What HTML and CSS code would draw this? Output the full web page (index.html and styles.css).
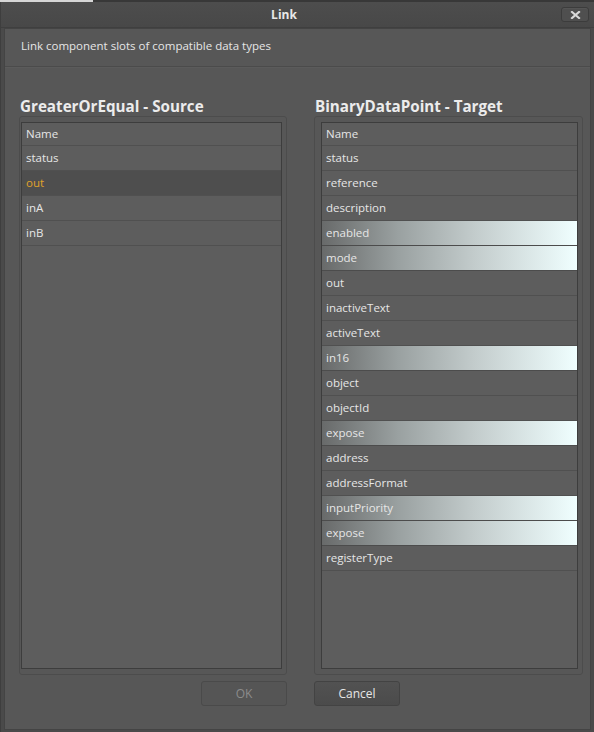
FILE: index.html
```html
<!DOCTYPE html>
<html>
<head>
<meta charset="utf-8">
<link rel="stylesheet" href="styles.css">
</head>
<body>
<div class="strip"><div class="strip-light"></div></div>
<div class="dialog">
  <div class="titlebar">
    <div class="title">Link</div>
    <div class="close">
      <svg width="11" height="8" viewBox="0 0 11 8"><path d="M2 1 L9 7 M9 1 L2 7" stroke="#d8d8d8" stroke-width="2.2" stroke-linecap="square"/></svg>
    </div>
  </div>
  <div class="content">
    <div class="desc">Link component slots of compatible data types</div>
    <div class="columns">
      <div class="col">
        <div class="heading">GreaterOrEqual - Source</div>
        <div class="frame frame-left">
          <div class="list">
            <div class="row head">Name</div>
            <div class="row">status</div>
            <div class="row selected">out</div>
            <div class="row">inA</div>
            <div class="row">inB</div>
          </div>
        </div>
        <div class="buttons buttons-left"><div class="btn disabled">OK</div></div>
      </div>
      <div class="col">
        <div class="heading">BinaryDataPoint - Target</div>
        <div class="frame frame-right">
          <div class="list">
            <div class="row head">Name</div>
            <div class="row">status</div>
            <div class="row">reference</div>
            <div class="row">description</div>
            <div class="row compat">enabled</div>
            <div class="row compat">mode</div>
            <div class="row">out</div>
            <div class="row">inactiveText</div>
            <div class="row">activeText</div>
            <div class="row compat">in16</div>
            <div class="row">object</div>
            <div class="row">objectId</div>
            <div class="row compat">expose</div>
            <div class="row">address</div>
            <div class="row">addressFormat</div>
            <div class="row compat">inputPriority</div>
            <div class="row compat">expose</div>
            <div class="row">registerType</div>
          </div>
        </div>
        <div class="buttons"><div class="btn">Cancel</div></div>
      </div>
    </div>
  </div>
</div>
</body>
</html>
```
FILE: styles.css
```css
html, body {
  margin: 0;
  padding: 0;
}
body {
  width: 594px;
  height: 732px;
  overflow: hidden;
  background: #3c3c3c;
  font-family: "Open Sans", "Liberation Sans", sans-serif;
  font-size: 11.5px;
  color: #e6e6e6;
}
.strip {
  height: 2px;
  background: #383838;
}
.strip-light {
  width: 93px;
  height: 2px;
  background: #d6d6d6;
}
.dialog {
  height: 730px;
  background: #4a4a4a;
  border-left: 1px solid #3e3e3e;
  box-sizing: border-box;
  display: flex;
  flex-direction: column;
}
.titlebar {
  height: 25px;
  border-bottom: 1px solid #3f3f3f;
  display: flex;
  align-items: center;
  background: linear-gradient(#4d4d4d, #484848);
}
.title {
  flex: 1;
  text-align: center;
  padding-left: 6px;
  font-weight: bold;
  font-size: 12px;
  color: #e8e8e8;
}
.close {
  width: 26px;
  height: 13px;
  margin-right: 5px;
  border: 1px solid #3c3c3c;
  border-radius: 3px;
  background: #4f4f4f;
  box-shadow: inset 0 1px 0 #555555;
  display: flex;
  align-items: center;
  justify-content: center;
}
.close svg { display: block; }
.content {
  margin: 0 3px 0 3px;
  height: 702px;
  box-sizing: border-box;
  border: 1px solid #444444;
  background: #575757;
}
.desc {
  padding: 9px 0 12px 16px;
  line-height: 16px;
  color: #e6e6e6;
  border-bottom: 1px solid #4b4b4b;
  box-shadow: 0 1px 0 #5b5b5b;
}
.columns {
  display: grid;
  grid-template-columns: 268px 269px;
  column-gap: 27px;
  padding-left: 14px;
  padding-top: 30px;
}
.heading {
  font-weight: bold;
  font-size: 15.2px;
  line-height: 18px;
  padding-left: 1px;
  margin-bottom: 1px;
  color: #ececec;
}
.frame {
  height: 559px;
  box-sizing: border-box;
  border: 1px solid #4c4c4c;
  border-radius: 3px;
  padding: 5px 4px 5px 1px;
}
.frame-right {
  padding-left: 6px;
}
.list {
  height: 100%;
  box-sizing: border-box;
  border: 1px solid #3d3d3d;
  background: #5d5d5d;
}
.row {
  height: 24px;
  line-height: 23px;
  border-bottom: 1px solid #505050;
  padding-left: 4px;
  white-space: nowrap;
}
.row.head {
  height: 22px;
  line-height: 21px;
}
.row.selected {
  background: #4e4e4e;
  color: #e0a32a;
}
.row.compat {
  background: linear-gradient(to right, #686a6a 0%, #9aa1a1 30%, #c3cccc 60%, #f0ffff 100%);
  border-bottom-color: #4c4c4c;
}
.buttons {
  display: flex;
  margin-top: 6px;
}
.buttons-left {
  justify-content: flex-end;
}
.btn {
  width: 84px;
  height: 23px;
  line-height: 23px;
  text-align: center;
  border: 1px solid #434343;
  border-radius: 3px;
  background: linear-gradient(#525252, #4b4b4b);
  color: #e6e6e6;
  font-size: 12px;
}
.btn.disabled {
  background: #555555;
  border-color: #4a4a4a;
  color: #8c8c8c;
}
```
